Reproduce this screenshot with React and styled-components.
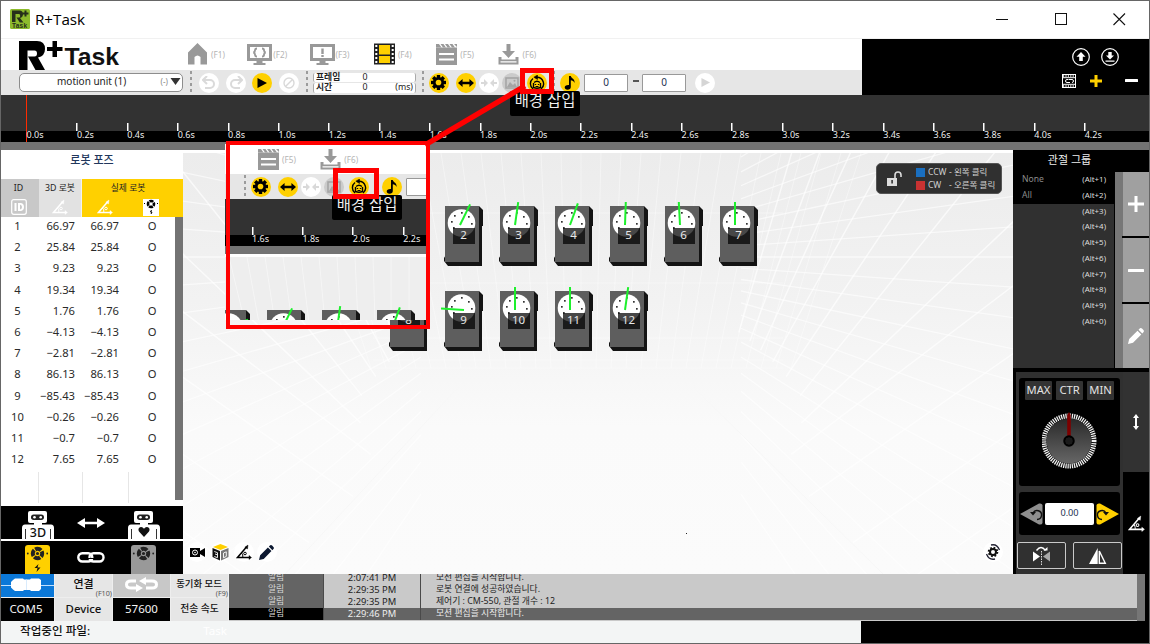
import React from "react";
import styled, { createGlobalStyle, css } from "styled-components";

const YELLOW = "#ffd000";
const DARK = "#323232";

const GlobalStyle = createGlobalStyle`
  *, *::before, *::after { box-sizing: border-box; }
  body {
    margin: 0;
    background: #fff;
    font-family: "Noto Sans", "Noto Sans CJK KR", sans-serif;
    font-size: 12px;
    color: #111;
    overflow: hidden;
  }
  svg { display: block; flex: none; }
`;

/* ---------- window shell ---------- */

const Window = styled.div`
  position: relative;
  width: 1150px;
  height: 644px;
  border: 1px solid #666;
  display: flex;
  flex-direction: column;
  overflow: hidden;
  background: #fff;
`;

const TitleBar = styled.header`
  height: 38px;
  flex: none;
  display: flex;
  align-items: center;
  padding: 0 23px 1px 9px;
  border-bottom: 1px solid #f1f1f1;
`;

const AppName = styled.span`
  margin-left: 5px;
  font: 15.2px "Open Sans", "Noto Sans", sans-serif;
  flex: 1;
  color: #000;
`;

const WindowControls = styled.div`
  display: flex;
  align-items: center;
  gap: 45.5px;
`;

const Header = styled.div`
  display: flex;
  height: 56px;
  flex: none;
`;

const HeaderLeft = styled.div`
  width: 861px;
  display: flex;
  flex-direction: column;
`;

const NavRow = styled.div`
  height: 31px;
  display: flex;
  background: #fff;
  overflow: hidden;
`;

const Brand = styled.div`
  width: 184px;
  flex: none;
  padding: 1px 0 0 17px;
`;

const NavItemBox = styled.div`
  width: 62.3px;
  flex: none;
  height: 30px;
  display: flex;
  align-items: center;
  gap: 1px;
  color: #b4b4b4;
  font-size: 8.2px;
`;

const ToolRow = styled.div`
  height: 25px;
  flex: none;
  display: flex;
  align-items: center;
  background: #e6e6e6;
  overflow: hidden;
`;

const MotionSelect = styled.div`
  margin-left: 18px;
  width: 164px;
  height: 19px;
  display: flex;
  align-items: center;
  padding: 0 1px 3px 37px;
  border: 1px solid #8d8d8d;
  border-radius: 5px;
  background: #fff;
  font-size: 10px;
  color: #222;
`;

const SelectHint = styled.span`
  margin-left: auto;
  margin-right: 2px;
  font-size: 8px;
  color: #888;
`;

const Dots = styled.div`
  width: 2px;
  height: 24px;
  flex: none;
  margin-left: ${(p) => p.$ml}px;
  background: repeating-linear-gradient(#9b9b9b 0 3px, transparent 3px 6px);
`;

const RoundButton = styled.div`
  width: 20px;
  height: 20px;
  flex: none;
  margin-left: ${(p) => p.$ml}px;
  border-radius: 50%;
  display: flex;
  align-items: center;
  justify-content: center;
  background: ${(p) => (p.$tone === "on" ? YELLOW : p.$tone === "dim" ? "#cbcbcb" : "#fff")};
`;

const FrameFields = styled.div`
  margin-left: 5px;
  width: 103px;
  display: flex;
  flex-direction: column;
  gap: 1px;
`;

const FrameField = styled.div`
  height: 9.5px;
  display: grid;
  grid-template-columns: 40px 18px 1fr;
  align-items: center;
  padding: 0 2px;
  background: #fff;
  border-radius: 2px;
  border: 1px solid #aaa;
  border-width: 0 1px;
  font-size: 8.8px;
  line-height: 9px;
  color: #222;
  text-align: center;
  & > :first-child { text-align: left; font-weight: 600; }
  & > :last-child { text-align: right; }
`;

const NumberBox = styled.div`
  width: 44px;
  height: 18px;
  flex: none;
  margin-left: ${(p) => p.$ml}px;
  padding-bottom: 1px;
  display: flex;
  align-items: center;
  justify-content: center;
  border: 1px solid #999;
  border-radius: 1px;
  background: #fff;
  color: #1e3252;
  font-size: 10px;
`;

const Dash = styled.div`
  width: 6px;
  height: 2px;
  margin: 0 0 4px 5px;
  background: #555;
`;

const HeaderRight = styled.div`
  flex: 1;
  background: #000;
  padding: 9px 10px 0 0;
  display: flex;
  flex-direction: column;
  align-items: flex-end;
`;

const IconLine = styled.div`
  display: flex;
  align-items: center;
  gap: ${(p) => p.$gap}px;
  height: ${(p) => p.$h}px;
  margin-right: ${(p) => p.$mr}px;
  & > :nth-child(3) { margin-left: 9px; }
`;

/* ---------- timeline ---------- */

const Timeline = styled.div`
  height: 55px;
  flex: none;
  display: flex;
  overflow: hidden;
  padding-left: ${(p) => p.$lead}px;
  background: linear-gradient(${DARK} 0 36px, #000 36px 47px, #737373 47px 55px);
`;

const Mark = styled.div`
  width: 50.4px;
  height: 47px;
  flex: none;
  padding: 35px 0 0 0.5px;
  font-size: 9px;
  line-height: 10px;
  color: #eee;
  background: ${(p) =>
    p.$cursor
      ? "linear-gradient(#ff2b00, #ff2b00) 0 0 / 1px 47px no-repeat"
      : "linear-gradient(#fff, #fff) 0 28px / 1.5px 8px no-repeat"};
`;

/* ---------- main area ---------- */

const Main = styled.div`
  height: 424px;
  flex: none;
  display: flex;
`;

const PosePanel = styled.aside`
  width: 182px;
  flex: none;
  display: flex;
  flex-direction: column;
  background: #fff;
`;

const PoseTitle = styled.div`
  height: 29px;
  line-height: 20px;
  text-align: center;
  font-size: 11px;
  font-weight: 500;
  color: #22375c;
`;

const PoseHead = styled.div`
  height: 38px;
  display: grid;
  grid-template-columns: 38px 43px 101px;
`;

const HeadCell = styled.div`
  background: ${(p) => p.$bg};
  border-right: ${(p) => (p.$line ? "1px solid #f2f2f2" : "0")};
  padding-right: ${(p) => p.$pr || 0}px;
  display: flex;
  flex-direction: column;
  align-items: center;
  font-size: 8.8px;
  line-height: 18px;
  color: #222;
`;

const HeadIcons = styled.div`
  height: 20px;
  display: flex;
  align-items: center;
  gap: 30px;
`;

const PoseBody = styled.div`
  height: 289px;
  display: flex;
`;

const PoseRows = styled.div`
  width: 174px;
  background:
    linear-gradient(#e6e6e6, #e6e6e6) 37px 255px / 1px 31px no-repeat,
    linear-gradient(#e6e6e6, #e6e6e6) 81px 255px / 1px 31px no-repeat,
    linear-gradient(#e6e6e6, #e6e6e6) 127px 255px / 1px 31px no-repeat;
`;

const PoseRow = styled.div`
  height: 21.2px;
  display: grid;
  grid-template-columns: 33px 41px 44px 66px;
  line-height: 17px;
  font-size: 11.2px;
  color: #2a2a2a;
  text-align: right;
  & > :first-child, & > :last-child { text-align: center; }
`;

const ScrollTrack = styled.div`
  width: 8px;
  height: 283px;
  background: #737373;
`;

const ModeBar = styled.div`
  height: 33px;
  flex: none;
  display: grid;
  grid-template-columns: 73px 33px 73px;
  justify-items: center;
  align-items: end;
  background: #000;
  & + & { margin-top: 2px; }
`;

const Stage = styled.section`
  position: relative;
  width: 830px;
  flex: none;
  border-top: 3px solid #fff;
  background: linear-gradient(#ececec, #f2f2f2 35%, #fafafa 65%, #fbfbfb);
  overflow: hidden;
`;

const Layer = styled.div`
  position: absolute;
  left: ${(p) => p.$x}px;
  top: ${(p) => p.$y}px;
`;

const Legend = styled.div`
  width: 126px;
  height: 31px;
  display: flex;
  align-items: center;
  padding-left: 10px;
  gap: 13px;
  border-radius: 5px;
  background: #303030;
  border: 1px solid #555;
`;

const LegendRows = styled.div`
  display: grid;
  gap: 3px;
`;

const LegendRow = styled.div`
  display: grid;
  grid-template-columns: 12px 21px auto;
  align-items: center;
  height: 10px;
  font-size: 8.5px;
  line-height: 10px;
  color: #d0d0d0;
  white-space: nowrap;
`;

const Swatch = styled.i`
  width: 9px;
  height: 9px;
  background: ${(p) => p.$c};
`;

const StageTools = styled.div`
  display: flex;
  gap: 3.3px;
`;

const ToolDot = styled.div`
  width: 20px;
  height: 20px;
  border-radius: 50%;
  background: #fff;
  display: flex;
  align-items: center;
  justify-content: center;
`;

/* ---------- right side ---------- */

const SidePanel = styled.aside`
  flex: 1;
  display: flex;
  flex-direction: column;
  background: #000;
`;

const SideTitle = styled.div`
  height: 22px;
  width: 113px;
  line-height: 20px;
  text-align: center;
  font-size: 11px;
  color: #eee;
`;

const GroupArea = styled.div`
  height: 196px;
  display: flex;
`;

const GroupList = styled.div`
  width: 101px;
  margin-right: 1px;
  background: #303030;
`;

const GroupRow = styled.div`
  height: 15.78px;
  display: flex;
  justify-content: space-between;
  padding: 0 8px 0 9px;
  font-size: 8.6px;
  line-height: 14px;
  color: #8b8b8b;
  background: ${(p) => (p.$solid ? "#000" : "transparent")};
`;

const Shortcut = styled.span`
  margin-left: auto;
  color: #ddd;
  font-size: 7.9px;
`;

const GroupScroll = styled.div`
  width: 7px;
  background: #777;
`;

const GroupButtons = styled.div`
  width: 27px;
  display: grid;
  grid-template-rows: repeat(3, 1fr);
  gap: 2px;
`;

const GroupButton = styled.div`
  display: flex;
  align-items: center;
  justify-content: center;
  background: #a0a0a0;
  border-left: 1px solid #777;
`;

const ControlArea = styled.div`
  margin-top: 4px;
  flex: 1;
  display: flex;
  padding-left: 3px;
`;

const Controls = styled.div`
  width: 107px;
  background: #303030;
  padding: 6px 0 0;
  display: flex;
  flex-direction: column;
  align-items: center;
`;

const Card = styled.div`
  width: 101px;
  height: ${(p) => p.$h}px;
  margin-bottom: 6px;
  background: #000;
  border-radius: 3px;
  display: flex;
  flex-direction: ${(p) => (p.$row ? "row" : "column")};
  align-items: center;
  justify-content: ${(p) => (p.$row ? "space-between" : "flex-start")};
  padding: ${(p) => (p.$row ? "0 1px" : "3px 0 0")};
`;

const LimitRow = styled.div`
  display: flex;
  gap: 4px;
  margin-bottom: 12px;
`;

const LimitButton = styled.div`
  width: 27px;
  height: 19px;
  line-height: 18px;
  background: #333;
  border-radius: 1px;
  text-align: center;
  font-size: 11.2px;
  color: #e4e4e4;
`;

const AngleInput = styled.div`
  width: 49px;
  height: 22px;
  line-height: 19px;
  border-radius: 2px;
  background: #fff;
  text-align: center;
  font-size: 9.2px;
  color: #1e3252;
`;

const MirrorRow = styled.div`
  display: flex;
  gap: 7px;
  margin-top: 1px;
`;

const MirrorButton = styled.div`
  width: 49px;
  height: 27px;
  border: 1px solid #c9c9c9;
  border-radius: 2px;
  display: flex;
  align-items: center;
  justify-content: center;
`;

const AxisTabs = styled.div`
  flex: 1;
  display: flex;
  flex-direction: column;
`;

const AxisTab = styled.div`
  height: ${(p) => p.$h}px;
  background: ${(p) => (p.$on ? "#323232" : "#000")};
  display: flex;
  align-items: center;
  justify-content: center;
`;

/* ---------- status ---------- */

const Status = styled.div`
  height: 47px;
  flex: none;
  display: flex;
  background: #000;
`;

const ConnGrid = styled.div`
  width: 228px;
  display: grid;
  grid-template-columns: 53px 57px 57px 57px;
  grid-template-rows: 23px 23px;
  gap: 1px;
  background: #eee;
`;

const tones = {
  blue: css`background: #0b78d8;`,
  gray: css`background: #c8c8c8;`,
  light: css`background: #e6e6e6; color: #111; font-weight: 500;`,
  black: css`background: #000; color: #f4f4f4;`,
};

const ConnCell = styled.div`
  position: relative;
  display: flex;
  align-items: center;
  justify-content: center;
  white-space: nowrap;
  font-size: ${(p) => p.$fs || 11.5}px;
  line-height: 12px;
  padding: 0 ${(p) => p.$pr || 0}px ${(p) => p.$pb || 2}px 0;
  ${(p) => tones[p.$tone]}
`;

const Key = styled.span`
  position: absolute;
  right: 0;
  bottom: 0;
  font-size: 7.2px;
  line-height: 8px;
  font-weight: 400;
  color: #555;
`;

const Log = styled.div`
  width: 908px;
  overflow: hidden;
  display: flex;
  flex-direction: column;
  justify-content: flex-end;
  border-bottom: 1px solid #c9c9c9;
`;

const LogRow = styled.div`
  height: 11.9px;
  flex: none;
  display: grid;
  grid-template-columns: 94px 98px 1fr;
  font-size: 9.4px;
  line-height: 11px;
  color: ${(p) => (p.$on ? "#eee" : "#222")};
  background: ${(p) => (p.$on ? "#646464" : "#c9c9c9")};
`;

const LogKind = styled.span`
  text-align: center;
  font-size: 8.8px;
  color: #d8d8d8;
  background: ${(p) => (p.$on ? "#000" : "#646464")};
`;

const LogTime = styled.span`
  text-align: center;
  border: 1px solid #4a4a4a;
  border-width: 0 1px;
`;

const LogText = styled.span`
  padding-left: 15px;
  white-space: nowrap;
  font-size: 8.8px;
`;

const LogScroll = styled.div`
  width: 8px;
  background: #767676;
`;

const FileBar = styled.footer`
  flex: 1;
  display: flex;
  background: #000;
`;

const FileInfo = styled.div`
  width: 860px;
  background: #f3f5f5;
  padding-left: 19px;
  line-height: 20px;
  font-size: 11.6px;
  font-weight: 500;
  display: flex;
`;

const Ghost = styled.span`
  margin-left: 113px;
  color: #fff;
  font-weight: 400;
`;

/* ---------- callouts ---------- */

const Callout = styled.div`
  position: absolute;
  left: ${(p) => p.$x}px;
  top: ${(p) => p.$y}px;
  width: ${(p) => p.$w}px;
  height: ${(p) => p.$h}px;
  border: ${(p) => p.$b}px solid #f00;
`;

const Tooltip = styled.div`
  position: absolute;
  left: ${(p) => p.$x}px;
  top: ${(p) => p.$y}px;
  width: 70px;
  height: 25px;
  line-height: 20px;
  background: #000;
  border-radius: 2px;
  color: #eee;
  text-align: center;
  font-size: 15.4px;
  white-space: nowrap;
`;

const Inset = styled.div`
  position: absolute;
  left: 224px;
  top: 143px;
  width: 202px;
  height: 176px;
  overflow: hidden;
  background: #fff;
`;

const InsetNav = styled.div`
  height: 30px;
  display: flex;
  align-items: center;
  padding-left: 31px;
`;

const InsetStage = styled.div`
  position: relative;
  height: 66px;
  border-top: 3px solid #fff;
  background: #eeeeee;
  overflow: hidden;
`;

const ConnectorSvg = styled.svg`
  position: absolute;
  left: 0;
  top: 0;
`;

/* ---------- icons ---------- */

const Gear = ({ s = 15, c = "#000", hole = YELLOW, r = 3 }) => (
  <svg width={s} height={s} viewBox="0 0 16 16">
    {[0, 45, 90, 135].map((a) => (
      <rect key={a} x="6.200" y="0" width="3.600" height="16" fill={c} transform={`rotate(${a} 8 8)`} />
    ))}
    <circle cx="8" cy="8" r="6" fill={c} />
    <circle cx="8" cy="8" r={r} fill={hole} />
  </svg>
);

const HArrow = ({ w = 14, c = "#000" }) => (
  <svg width={w} height={w / 2} viewBox="0 0 28 14">
    <path d="M0 7 L8 0 V5 H20 V0 L28 7 L20 14 V9 H8 V14Z" fill={c} />
  </svg>
);

const Squeeze = () => (
  <svg width="16" height="8" viewBox="0 0 16 8">
    <path d="M0 3h3V0l4 4-4 4V5H0zM16 3h-3V0L9 4l4 4V5h3z" fill="#d9d9d9" />
  </svg>
);

const Picture = () => (
  <svg width="14" height="12" viewBox="0 0 14 12">
    <rect x="1" y="1" width="12" height="10" fill="none" stroke="#a5a5a5" strokeWidth="1.6" />
    <path d="M2 10l3-5 3 3 2-2 2 4z" fill="#a5a5a5" />
    <circle cx="9.5" cy="3.8" r="1" fill="#a5a5a5" />
  </svg>
);

const RobotTurn = () => (
  <svg width="16" height="16" viewBox="0 0 16 16" fill="none" stroke="#000" strokeWidth="1.4">
    <path d="M4 14A6.600 6.600 0 0 1 4 3.500M12 14A6.600 6.600 0 0 0 8 2.200" />
    <path d="M8.500 0v4.500L4.800 2.200z" fill="#000" strokeWidth=".5" />
    <path d="M5 7.500q3-2.600 6 0M4.500 8v4.500q3.500 1.500 7 0V8" />
    <path d="M5.800 9.500h1.400M8.800 9.500h1.400M6.500 11.500h3" strokeWidth="1.200" />
  </svg>
);

const Note = () => (
  <svg width="12" height="14" viewBox="0 0 12 14">
    <path d="M5 0h1.800c.3 2.500 4.500 2.800 3.700 7C9.800 5 8.500 4.500 6.800 4.200V11c0 1.700-1.400 2.800-3.200 2.800S.7 12.700.7 11.300 2.200 8.800 5 9z" fill="#000" />
  </svg>
);

const Play = ({ c = "#000", w = 10 }) => (
  <svg width={w} height={w} viewBox="0 0 10 10">
    <path d="M0.500 0L10 5L0.500 10Z" fill={c} />
  </svg>
);

const Undo = ({ flip }) => (
  <svg width="14" height="14" viewBox="0 0 14 14" fill="none" stroke="#dadada" strokeWidth="2" transform={flip ? "scale(-1 1)" : undefined}>
    <path d="M2 4h6a4 4 0 0 1 0 8H3" />
    <path d="M5 0L1 4l4 4" />
  </svg>
);

const Forbid = () => (
  <svg width="12" height="12" viewBox="0 0 12 12" fill="none" stroke="#d9d9d9" strokeWidth="1.4">
    <circle cx="6" cy="6" r="5" />
    <path d="M2.500 9.500L9.500 2.500" />
  </svg>
);

const Logo = () => (
  <svg width="104" height="30" viewBox="0 0 104 30">
    <path d="M1 1h18q8 0 8 8 0 7-7 8.500L27 30h-9.500L10 16.500h6.500q2.500 0 2.500-3t-2.500-3H9.500V30H1z" fill="#000" />
    <path d="M34.500 1h4.500v6h5.500v4H39v6h-4.500v-6H29V7h5.500z" fill="#000" />
    <text x="46.500" y="24.500" textLength="54.500" lengthAdjust="spacingAndGlyphs" fontFamily="Liberation Sans, sans-serif" fontWeight="700" fontSize="24.500" fill="#111">Task</text>
  </svg>
);

const AppIcon = () => (
  <svg width="20" height="20" viewBox="0 0 20 20">
    <rect width="20" height="20" rx="1.500" fill="#8dbb2c" />
    <path d="M2 1.500h7.500q3.500 0 3.500 3.500t-3 4l3.500 4.500H9.800L6.500 8.500H9q1.200 0 1.200-1.600T9 5H5.500v8H2z" fill="#26301a" />
    <path d="M14.500 1.500h2v2h2v2h-2v2h-2v-2h-2v-2h2z" fill="#26301a" />
    <text x="2" y="18.800" fontSize="6.500" fontWeight="700" textLength="15" fontFamily="Liberation Sans, sans-serif" fill="#26301a">Task</text>
  </svg>
);

const G = "#999";
const NavIcon = ({ name }) => (
  <svg width="25" height="22" viewBox="0 0 25 22">
    {name === "home" && <path d="M12.500 0L22 9.500V21.500H15.500V14q-3-3-6 0v7.500H3V9.500z" fill={G} />}
    {(name === "code" || name === "alert") && (
      <g>
        <path d="M0 1h25v17H0zM3 4v11h19V4z" fill={G} fillRule="evenodd" />
        <path d="M9.500 18h6v2h3v2h-12v-2h3z" fill={G} />
        {name === "alert" ? (
          <path d="M11.300 5.500h2.400v5.500h-2.400zM11.300 12h2.400v2h-2.400z" fill={G} />
        ) : (
          <path d="M10 5.500q-2 0-2 1.800t-1.600 2.200q1.600.4 1.600 2.200t2 1.800M15 5.500q2 0 2 1.800t1.600 2.200q-1.600.4-1.600 2.200t-2 1.800" fill="none" stroke={G} strokeWidth="1.900" />
        )}
      </g>
    )}
    {name === "film" && (
      <g>
        <rect x="2" y="0.500" width="21" height="21" fill="#222" />
        <rect x="7" y="2" width="11" height="9.500" fill={YELLOW} />
        <rect x="7" y="13" width="11" height="7" fill={YELLOW} />
        {[2, 6, 10, 14, 18].map((y) => (
          <g key={y} fill="#fff">
            <rect x="3.300" y={y} width="2" height="2" />
            <rect x="19.700" y={y} width="2" height="2" />
          </g>
        ))}
      </g>
    )}
    {name === "clap" && (
      <g fill={G}>
        <path d="M2 1h3l2.500 3.500H2zM6.500 1h3L12 4.500H9zM11 1h3l2.500 3.500h-3zM15.500 1h3L21 4.500h-3zM20 1h3v3z" />
        <path d="M2 4.500h21V22H2zM5 10v2h15v-2zM5 15.500v2h15v-2z" fillRule="evenodd" />
      </g>
    )}
    {name === "save" && (
      <g fill={G}>
        <path d="M10.500 1h4v7h4.500l-6.500 7L6 8h4.500z" />
        <path d="M2.500 14h3v2.500h14V14h3v7.500h-20zM4.500 18.300v1.200h16v-1.200z" fillRule="evenodd" />
      </g>
    )}
  </svg>
);

const Angle = ({ c = "#000", s = 14 }) => (
  <svg width={s} height={s} viewBox="0 0 16 16" fill="none" stroke={c} strokeWidth="1.500">
    <path d="M10.500 3L1.500 13.500H14" />
    <path d="M8.800 3.300L12 1l-.5 4zM13 11.500l2.500 2-2.500 2z" fill={c} strokeWidth=".4" />
    <circle cx="9" cy="9.500" r="1.300" strokeWidth="1" />
    <path d="M5.500 9q1.800 1.500 1.300 4" strokeWidth="1" />
  </svg>
);

const Pencil = ({ c = "#0c1830", s = 15 }) => (
  <svg width={s} height={s} viewBox="0 0 16 16">
    <path d="M0 16l1.200-5L9.500 2.700l3.800 3.800L5 14.800zM10.500 1.700L12 .3q1-.6 2 .3l1.400 1.400q.9 1 .2 2l-1.300 1.500z" fill={c} />
  </svg>
);

const Robot = ({ kind }) => (
  <svg width="32" height="28" viewBox="0 0 32 28">
    <rect x="6" y="0" width="19" height="12" rx="2" fill="#fff" />
    <rect x="9" y="3.500" width="13" height="5.500" rx="2.700" fill="#222" />
    <circle cx="12.500" cy="6.200" r="1.300" fill="#fff" />
    <circle cx="18.700" cy="6.200" r="1.300" fill="#fff" />
    <rect x="12" y="11" width="8" height="4" fill="#fff" />
    <path d="M0 28V17q0-3.500 3-3.500h26q3 0 3 3.500v11h-3.200V18h-.8v10H4V18h-.800v10z" fill="#fff" />
    {kind === "3D" ? (
      <text x="16" y="25.500" textAnchor="middle" fontFamily="Noto Sans, sans-serif" fontSize="12.500" fontWeight="500" fill="#111">3D</text>
    ) : (
      <path d="M16 26l-5-5.500q-1.500-3 1-4.300 2.500-.8 4 1.500 1.500-2.300 4-1.500 2.500 1.300 1 4.300z" fill="#111" />
    )}
  </svg>
);

const Motor = ({ c, bolt }) => (
  <svg width="25" height="29" viewBox="0 0 25 29">
    <path d="M0 29V3q0-3 3-3h19q3 0 3 3v26z" fill={c} />
    <circle cx="12.500" cy="8.500" r="4.700" fill="none" stroke="#222" strokeWidth="4" strokeDasharray="6.300 1.083" strokeDashoffset="3" />
    <circle cx="12.500" cy="8.500" r="1.600" fill="#222" />
    <circle cx="2.800" cy="8.500" r=".9" fill="#222" />
    <circle cx="22.200" cy="8.500" r=".9" fill="#222" />
    {bolt && <path d="M13.500 19l-4 4h3l-1 4 4-4.500h-3z" fill="#111" />}
  </svg>
);

const ServoIcon = () => (
  <svg width="16" height="17" viewBox="0 0 16 17">
    <rect width="16" height="17" fill="#fff" />
    <circle cx="8" cy="5" r="3" fill="none" stroke="#000" strokeWidth="2.600" strokeDasharray="4 .712" strokeDashoffset="2" />
    <path d="M1 4.500h1M14 4.500h1M8.500 11l-1 2h1.500l-1 2" stroke="#000" fill="none" />
  </svg>
);

const Link = () => (
  <svg width="28" height="11" viewBox="0 0 28 11" fill="none" stroke="#fff" strokeWidth="2.400">
    <rect x="1.300" y="1.300" width="14" height="8.200" rx="4" />
    <rect x="12.500" y="1.300" width="14" height="8.200" rx="4" />
    <path d="M8 6.500h11" stroke="#000" strokeWidth="1" />
  </svg>
);

const Lock = () => (
  <svg width="16" height="16" viewBox="0 0 16 16">
    <path d="M0 7h10v8H0z" fill="#ddd" />
    <path d="M8 7V4q0-3 3-3t3 3v2" fill="none" stroke="#ddd" strokeWidth="1.600" />
    <path d="M4.300 9h1.600v3.500H4.300z" fill="#333" />
  </svg>
);

const CircleIcon = ({ down }) => (
  <svg width="18" height="18" viewBox="0 0 18 18">
    <circle cx="9" cy="9" r="8.300" fill="none" stroke="#fff" strokeWidth="1.200" />
    {down ? (
      <path d="M7.300 4h3.400v3.500H13L9 11.500 5 7.500h2.300zM4.500 12.500h9v1.200h-9z" fill="#fff" />
    ) : (
      <path d="M9 4l4.500 4.800h-2.700V13H7.200V8.800H4.500z" fill="#fff" />
    )}
  </svg>
);

const FilmLoop = () => (
  <svg width="14" height="14" viewBox="0 0 14 14">
    <rect x=".5" y=".5" width="13" height="13" fill="none" stroke="#fff" />
    <path d="M1 2h12M1 12h12" stroke="#fff" strokeWidth="1.600" strokeDasharray="1.200 1.200" />
    <path d="M1 3.700h12M1 10.300h12" stroke="#fff" strokeWidth="1" />
    <path d="M6.500 5.500H5Q3.500 5.500 3.500 7T5 8.500h3M7 5.500h3q1.500 0 1.500 1.500T10 8.500" fill="none" stroke="#fff" />
  </svg>
);

const Plus = ({ s = 12, c = "#fff", w = 3 }) => (
  <svg width={s} height={s} viewBox={`0 0 ${s} ${s}`}>
    <path d={`M0 ${s / 2}H${s}M${s / 2} 0V${s}`} stroke={c} strokeWidth={w} />
  </svg>
);

const Minus = ({ s = 12 }) => (
  <svg width={s} height="3" viewBox={`0 0 ${s} 3`}>
    <rect width={s} height="3" rx=".5" fill="#fff" />
  </svg>
);

const TurnTriangle = ({ right }) => (
  <svg width="23" height="22" viewBox="0 0 23 22" transform={right ? "scale(-1 1)" : undefined}>
    <path d="M0 11L19 .5Q22 0 22.500 2v18q-.5 2-3.500 1.500z" fill={right ? YELLOW : "#8f8f8f"} />
    <path d="M13 10a4.500 4.500 0 1 1 4 6.500" fill="none" stroke="#111" strokeWidth="1.400" />
    <path d="M10 9h6l-3 3.500z" fill="#111" />
  </svg>
);

const Knob = () => (
  <svg width="56" height="57" viewBox="-27 -29 56 57">
    <defs>
      <linearGradient id="knob" x1="0" y1="0" x2="0" y2="1">
        <stop offset="0" stopColor="#2a2a2a" />
        <stop offset="1" stopColor="#666" />
      </linearGradient>
    </defs>
    <circle r="25" fill="none" stroke="#f0f0f0" strokeWidth="5" strokeDasharray="1.300 .88" />
    <circle r="22.500" fill="url(#knob)" />
    <path d="M-1.800 -5V-26L0 -29 1.800 -26V-5z" fill="#7d0000" />
    <circle r="4.500" fill="none" stroke="#000" strokeWidth="2.500" />
    <circle r="3.500" fill="#1a1a1a" />
  </svg>
);

const MirrorTurn = () => (
  <svg width="19" height="19" viewBox="0 0 19 19">
    <path d="M1 5.500l7 5-7 5z" fill="#fff" />
    <path d="M18 5.500l-7 5 7 5z" fill="#a8a8a8" />
    <path d="M9.500 5v14" stroke="#ddd" strokeDasharray="1.500 1" />
    <path d="M4.500 4.500q4.500-6 9 0" fill="none" stroke="#fff" strokeWidth="1.300" />
    <path d="M11.500 4.500h4V1z" fill="#fff" />
  </svg>
);

const MirrorFlat = () => (
  <svg width="18" height="18" viewBox="0 0 18 18">
    <path d="M8.700 1v16H0z" fill="#fff" />
    <path d="M10.300 4v12.200h6z" fill="none" stroke="#fff" strokeWidth="1.400" />
  </svg>
);

const UpDown = () => (
  <svg width="6" height="16" viewBox="0 0 6 16">
    <path d="M3 0l3 4H4v8h2l-3 4-3-4h2V4H0z" fill="#fff" />
  </svg>
);

const Cube = () => (
  <svg width="17" height="17" viewBox="0 0 17 17">
    <path d="M8.500 0L16 3 8.500 6 1 3z" fill={YELLOW} />
    <path d="M.5 4L8 7v9.500L.5 13z" fill="#111" />
    <path d="M16.500 4L9 7v9.500l7.500-3.500z" fill="#777" />
    <path d="M2.300 7.500l3.200 1.200v5l-3.200-1.200M3 10l2 .7M11.500 9v4.800l2.800-1.400V7.800z" fill="none" stroke="#fff" strokeWidth=".9" />
  </svg>
);

const Camera = () => (
  <svg width="15" height="11" viewBox="0 0 15 11">
    <path d="M0 1h10v3l5-3v9l-5-3v3H0z" fill="#000" />
    <circle cx="5" cy="5.500" r="2.500" fill="none" stroke="#fff" />
    <circle cx="5" cy="5.500" r=".8" fill="#fff" />
  </svg>
);

const GearTurn = () => (
  <svg width="16" height="16" viewBox="0 0 16 16" fill="none">
    <circle cx="8" cy="8" r="4.300" stroke="#111" strokeWidth="2" strokeDasharray="1.700 1.677" />
    <circle cx="8" cy="8" r="3" stroke="#111" strokeWidth="2" />
    <path d="M6 1q6-1.500 8.500 5M10 15q-6 1.500-8.500-5" stroke="#223" strokeWidth="1.300" />
  </svg>
);

const Plug = () => (
  <svg width="53" height="14" viewBox="0 0 53 14">
    <path d="M0 7.500h53" stroke="#bfe0ff" strokeWidth="1.200" />
    <path d="M10 4l2-2 2-1.500h8L23 1.500h3V12h-3l-1 1h-8l-2-1.500-2-2zM26 1.500h3l1-1h8l2 1.500v9L38 13h-8l-1-1h-3z" fill="#fff" />
    <path d="M25.500 1.500V12" stroke="#cfe6fb" strokeWidth=".8" />
  </svg>
);

const Loop = () => (
  <svg width="33" height="15" viewBox="0 0 33 15" fill="none" stroke="#fff" strokeWidth="3">
    <path d="M11 4H6Q1.500 4 1.500 7.500T6 11h6M20 4h7q4.500 0 4.500 3.500T27 11h-6" />
    <path d="M21 0v8l-7-4zM11 7v8l7-4z" fill="#fff" stroke="none" />
  </svg>
);

/* ---------- composed parts ---------- */

const NavItem = ({ icon, label }) => (
  <NavItemBox>
    <NavIcon name={icon} />
    {label}
  </NavItemBox>
);

const Servo = ({ id, angle }) => {
  const rad = (angle * Math.PI) / 180;
  const len = angle === -86 ? 23 : 23;
  const cx = angle === -86 ? 25 : 21;
  const cy = 25;
  return (
    <svg width="50" height="72" viewBox="0 0 50 72">
      <path d="M5 58v3l4 5h34V26h1V10l-4-4H38z" fill="#141414" />
      <rect x="6" y="6" width="34" height="56" fill="#5e5e5e" />
      <circle cx="22.500" cy="23" r="13.800" fill="#fff" />
      {[[-10, -1], [-7, -7], [0, -10], [7, -6], [10, 1], [-8, 5]].map(([x, y]) => (
        <rect key={`${x}${y}`} x={22 + x} y={22 + y} width="1.700" height="1.700" fill="#333" />
      ))}
      <rect x="14" y="28" width="22" height="16" fill="rgba(0,0,0,.72)" />
      {id && <text x="24.500" y="38.600" textAnchor="middle" fontFamily="Noto Sans, sans-serif" fontSize="11.500" fill="#e8e8e8">{id}</text>}
      <path d={`M${cx} ${cy}L${cx + Math.sin(rad) * len} ${cy - Math.cos(rad) * len}`} stroke="#1ef02d" strokeWidth="2" />
    </svg>
  );
};

const SERVOS = [
  [2, 26, 256, 47], [3, 8, 311, 47], [4, 20, 366, 47], [5, 2, 421, 47], [6, -3, 476, 47], [7, 0, 531, 47],
  [8, 0, 201, 132], [9, -86, 256, 132], [10, 0, 311, 132], [11, 0, 366, 132], [12, 8, 421, 132],
];

/* Perspective room drawn behind the servos. */
const Grid = () => {
  const cx = 398;
  const cy = 104;
  const rays = [];
  for (let i = -14; i <= 14; i++) {
    const slope = Math.tan((i * 4 * Math.PI) / 180);
    rays.push(`M${cx + 160} ${cy + 160 * slope}L${cx + 480} ${cy + 480 * slope}`);
    rays.push(`M${cx - 160} ${cy + 160 * slope}L${cx - 480} ${cy + 480 * slope}`);
  }
  const ribs = [];
  [[180, 3.4], [200, 2.7], [222, 2.2], [250, 1.8], [285, 1.5], [330, 1.25], [395, 0.95], [470, 0.76], [570, 0.7], [680, 0.7], [790, 0.7]].forEach(([d, s]) => {
    const drop = Math.min(320, d * 0.42);
    ribs.push(`M${cx + d + 110 / s} ${cy - 110}L${cx + d} ${cy}L${cx + d - drop / s} ${cy + drop}`);
    ribs.push(`M${cx - d - 110 / s} ${cy - 110}L${cx - d} ${cy}L${cx - d + drop / s} ${cy + drop}`);
  });
  const walls = [];
  for (let i = -14; i <= 14; i++) walls.push(`M${cx + i * 15} 215L${cx + i * 20} 0`);
  [60, 130, 185, 207, 215].forEach((y) => walls.push(`M190 ${y}H600`));
  return (
    <svg width="830" height="421" viewBox="0 0 830 421" fill="none" stroke="#fff">
      <path d={rays.join("")} strokeWidth="1.300" opacity=".6" />
      <path d={ribs.join("")} strokeWidth="1.500" opacity=".65" />
      <path d={walls.join("")} strokeWidth="1" opacity=".4" />
      <path d="M102 421L281 228H504L700 421" stroke="#f7f7f7" />
      <rect x="503" y="380" width="1" height="1" fill="#222" stroke="none" />
    </svg>
  );
};

const EditTools = () => (
  <>
    <RoundButton $ml={4.7} $tone="on"><Gear hole={YELLOW} /></RoundButton>
    <RoundButton $ml={7} $tone="on"><HArrow w={16} /></RoundButton>
    <RoundButton $ml={3.5}><Squeeze /></RoundButton>
    <RoundButton $ml={3} $tone="dim"><Picture /></RoundButton>
    <RoundButton $ml={4.5} $tone="on"><RobotTurn /></RoundButton>
  </>
);

const marks = Array.from({ length: 22 }, (_, i) => (i * 0.2).toFixed(1) + "s");

const POSES = [
  ["1", "66.97"], ["2", "25.84"], ["3", "9.23"], ["4", "19.34"], ["5", "1.76"], ["6", "−4.13"],
  ["7", "−2.81"], ["8", "86.13"], ["9", "−85.43"], ["10", "−0.26"], ["11", "−0.7"], ["12", "7.65"],
];

const LOGS = [
  ["2:07:41 PM", "모션 편집을 시작합니다."],
  ["2:29:35 PM", "로봇 연결에 성공하였습니다."],
  ["2:29:35 PM", "제어기 : CM-550, 관절 개수 : 12"],
  ["2:29:46 PM", "모션 편집을 시작합니다."],
];

export default function App() {
  return (
    <Window>
      <GlobalStyle />
      <TitleBar>
        <AppIcon />
        <AppName>R+Task</AppName>
        <WindowControls>
          <svg width="13" height="13"><path d="M0 6.500h12" stroke="#111" /></svg>
          <svg width="13" height="13"><rect x=".5" y=".5" width="11" height="11" fill="none" stroke="#111" /></svg>
          <svg width="13" height="13"><path d="M.5 .5l11.500 11.500M12 .5L.5 12" stroke="#111" strokeWidth="1.100" /></svg>
        </WindowControls>
      </TitleBar>

      <Header>
        <HeaderLeft>
          <NavRow>
            <Brand><Logo /></Brand>
            <NavItem icon="home" label="(F1)" />
            <NavItem icon="code" label="(F2)" />
            <NavItem icon="alert" label="(F3)" />
            <NavItem icon="film" label="(F4)" />
            <NavItem icon="clap" label="(F5)" />
            <NavItem icon="save" label="(F6)" />
          </NavRow>
          <ToolRow>
            <MotionSelect>
              motion unit (1)
              <SelectHint>(-)</SelectHint>
              <svg width="11" height="7" viewBox="0 0 11 7"><path d="M.5 0h10L5.500 7z" fill="#333" /></svg>
            </MotionSelect>
            <Dots $ml={7} />
            <RoundButton $ml={7}><Undo /></RoundButton>
            <RoundButton $ml={7}><Undo flip /></RoundButton>
            <RoundButton $ml={6} $tone="on"><Play /></RoundButton>
            <RoundButton $ml={7}><Forbid /></RoundButton>
            <Dots $ml={7} />
            <FrameFields>
              <FrameField><span>프레임</span><span>0</span><span /></FrameField>
              <FrameField><span>시간</span><span>0</span><span>(ms)</span></FrameField>
            </FrameFields>
            <Dots $ml={6} />
            <EditTools />
            <Dots $ml={6} />
            <RoundButton $ml={5} $tone="on"><Note /></RoundButton>
            <NumberBox $ml={4.5}>0</NumberBox>
            <Dash />
            <NumberBox $ml={3}>0</NumberBox>
            <RoundButton $ml={9}><Play c="#d5d5d5" w={9} /></RoundButton>
          </ToolRow>
        </HeaderLeft>
        <HeaderRight>
          <IconLine $gap={11} $h={18} $mr={20}><CircleIcon /><CircleIcon down /></IconLine>
          <IconLine $gap={14} $h={33} $mr={1.5}>
            <FilmLoop />
            <Plus c={YELLOW} />
            <Minus s={13} />
          </IconLine>
        </HeaderRight>
      </Header>

      <Timeline $lead={25}>
        {marks.map((m, i) => <Mark key={m} $cursor={i === 0}>{m}</Mark>)}
      </Timeline>

      <Main>
        <PosePanel>
          <PoseTitle>로봇 포즈</PoseTitle>
          <PoseHead>
            <HeadCell $bg="#c8c8c8" $pr={3}>
              ID
              <HeadIcons>
                <svg width="16" height="16" viewBox="0 0 16 16">
                  <rect x=".7" y=".7" width="14.600" height="14.600" rx="2" fill="none" stroke="#fff" strokeWidth="1.200" />
                  <path d="M3.500 4h2v8h-2zM7 4h3q3 .5 3 4t-3 4H7zM9 5.500v5q2-.5 2-2.500t-2-2.500" fill="#fff" fillRule="evenodd" />
                </svg>
              </HeadIcons>
            </HeadCell>
            <HeadCell $bg="#e2e2e2" $line>3D 로봇<HeadIcons><Angle c="#fff" s={16} /></HeadIcons></HeadCell>
            <HeadCell $bg={YELLOW} $pr={9}>
              실제 로봇
              <HeadIcons><Angle c="#fff" s={16} /><ServoIcon /></HeadIcons>
            </HeadCell>
          </PoseHead>
          <PoseBody>
            <PoseRows>
              {POSES.map(([id, v]) => (
                <PoseRow key={id}><span>{id}</span><span>{v}</span><span>{v}</span><span>O</span></PoseRow>
              ))}
            </PoseRows>
            <ScrollTrack />
          </PoseBody>
          <ModeBar><Robot kind="3D" /><svg width="28" height="32" viewBox="0 0 28 32"><path d="M0 16l8-5v3.700h12V11l8 5-8 5v-3.700H8V21z" fill="#fff" /></svg><Robot kind="heart" /></ModeBar>
          <ModeBar><Motor c={YELLOW} bolt /><svg width="28" height="33" viewBox="0 -11 28 33"><Link /></svg><Motor c="#999" /></ModeBar>
        </PosePanel>

        <Stage>
          <Grid />
          {SERVOS.map(([id, a, x, y]) => (
            <Layer key={id} $x={x} $y={y}><Servo id={id} angle={a} /></Layer>
          ))}
          <Layer $x={693} $y={10}>
            <Legend>
              <Lock />
              <LegendRows>
                <LegendRow><Swatch $c="#1a6fc0" /><span>CCW</span><span>- 왼쪽 클릭</span></LegendRow>
                <LegendRow><Swatch $c="#c83232" /><span>CW</span><span>- 오른쪽 클릭</span></LegendRow>
              </LegendRows>
            </Legend>
          </Layer>
          <Layer $x={4} $y={389}>
            <StageTools>
              <ToolDot><Camera /></ToolDot>
              <ToolDot><Cube /></ToolDot>
              <ToolDot><Angle s={16} /></ToolDot>
              <ToolDot><Pencil /></ToolDot>
            </StageTools>
          </Layer>
          <Layer $x={800} $y={389}><ToolDot><GearTurn /></ToolDot></Layer>
        </Stage>

        <SidePanel>
          <SideTitle>관절 그룹</SideTitle>
          <GroupArea>
            <GroupList>
              {[1, 2, 3, 4, 5, 6, 7, 8, 9, 0].map((n, i) => (
                <GroupRow key={n} $solid={i < 2}>
                  {["None", "All"][i]}
                  <Shortcut>(Alt+{n})</Shortcut>
                </GroupRow>
              ))}
            </GroupList>
            <GroupScroll />
            <GroupButtons>
              <GroupButton><Plus s={16} w={3} /></GroupButton>
              <GroupButton><Minus s={16} /></GroupButton>
              <GroupButton><Pencil c="#fff" s={16} /></GroupButton>
            </GroupButtons>
          </GroupArea>
          <ControlArea>
            <Controls>
              <Card $h={108}>
                <LimitRow><LimitButton>MAX</LimitButton><LimitButton>CTR</LimitButton><LimitButton>MIN</LimitButton></LimitRow>
                <Knob />
              </Card>
              <Card $h={43} $row>
                <TurnTriangle />
                <AngleInput>0.00</AngleInput>
                <TurnTriangle right />
              </Card>
              <MirrorRow>
                <MirrorButton><MirrorTurn /></MirrorButton>
                <MirrorButton><MirrorFlat /></MirrorButton>
              </MirrorRow>
            </Controls>
            <AxisTabs>
              <AxisTab $h={100} $on><UpDown /></AxisTab>
              <AxisTab $h={102}><Angle c="#fff" s={17} /></AxisTab>
            </AxisTabs>
          </ControlArea>
        </SidePanel>
      </Main>

      <Status>
        <ConnGrid>
          <ConnCell $tone="blue"><Plug /></ConnCell>
          <ConnCell $tone="light" $fs={11} $pb={4}>연결<Key>(F10)</Key></ConnCell>
          <ConnCell $tone="gray"><Loop /></ConnCell>
          <ConnCell $tone="light" $fs={9.4} $pb={4} $pr={1}>동기화 모드<Key>(F9)</Key></ConnCell>
          <ConnCell $tone="black" $pr={3}>COM5</ConnCell>
          <ConnCell $tone="light" $fs={11.4}>Device</ConnCell>
          <ConnCell $tone="black">57600</ConnCell>
          <ConnCell $tone="light" $fs={9.8}>전송 속도</ConnCell>
        </ConnGrid>
        <Log>
          {LOGS.map(([time, text], i) => (
            <LogRow key={i} $on={i === 3}>
              <LogKind $on={i === 3}>알림</LogKind>
              <LogTime>{time}</LogTime>
              <LogText>{text}</LogText>
            </LogRow>
          ))}
        </Log>
        <LogScroll />
      </Status>
      <FileBar>
        <FileInfo>작업중인 파일:<Ghost>Task</Ghost></FileInfo>
      </FileBar>

      <Tooltip $x={509} $y={90}>배경 삽입</Tooltip>
      <Inset>
        <InsetNav><NavItem icon="clap" label="(F5)" /><NavItem icon="save" label="(F6)" /></InsetNav>
        <ToolRow>
          <Dots $ml={19} />
          <EditTools />
          <RoundButton $ml={13} $tone="on"><Note /></RoundButton>
          <NumberBox $ml={4.5} />
        </ToolRow>
        <Timeline $lead={26.5}>
          {marks.slice(8, 12).map((m) => <Mark key={m}>{m}</Mark>)}
        </Timeline>
        <InsetStage>
          <svg width="202" height="66" stroke="#fff" opacity=".45">
            <path d="M4 0l16 66M22 0l12 66M40 0l10 66M58 0l9 66M76 0l8 66M94 0l6 66M112 0l4 66M130 0l3 66M148 0l2 66M166 0v66M184 0v66" />
          </svg>
          {[[1, 66, -19], [2, 26, 36], [3, 8, 91], [4, 20, 146]].map(([id, a, x]) => (
            <Layer key={id} $x={x} $y={47}><Servo angle={a} /></Layer>
          ))}
        </InsetStage>
      </Inset>
      <Tooltip $x={331} $y={194}>배경 삽입</Tooltip>
      <ConnectorSvg width="1150" height="200"><path d="M424 144L524 85" stroke="#f00" strokeWidth="5.500" /></ConnectorSvg>
      <Callout $x={225} $y={140} $w={204} $h={188} $b={4.5} />
      <Callout $x={519} $y={67} $w={34} $h={26} $b={5} />
      <Callout $x={332} $y={167} $w={46} $h={31} $b={5} />
    </Window>
  );
}
